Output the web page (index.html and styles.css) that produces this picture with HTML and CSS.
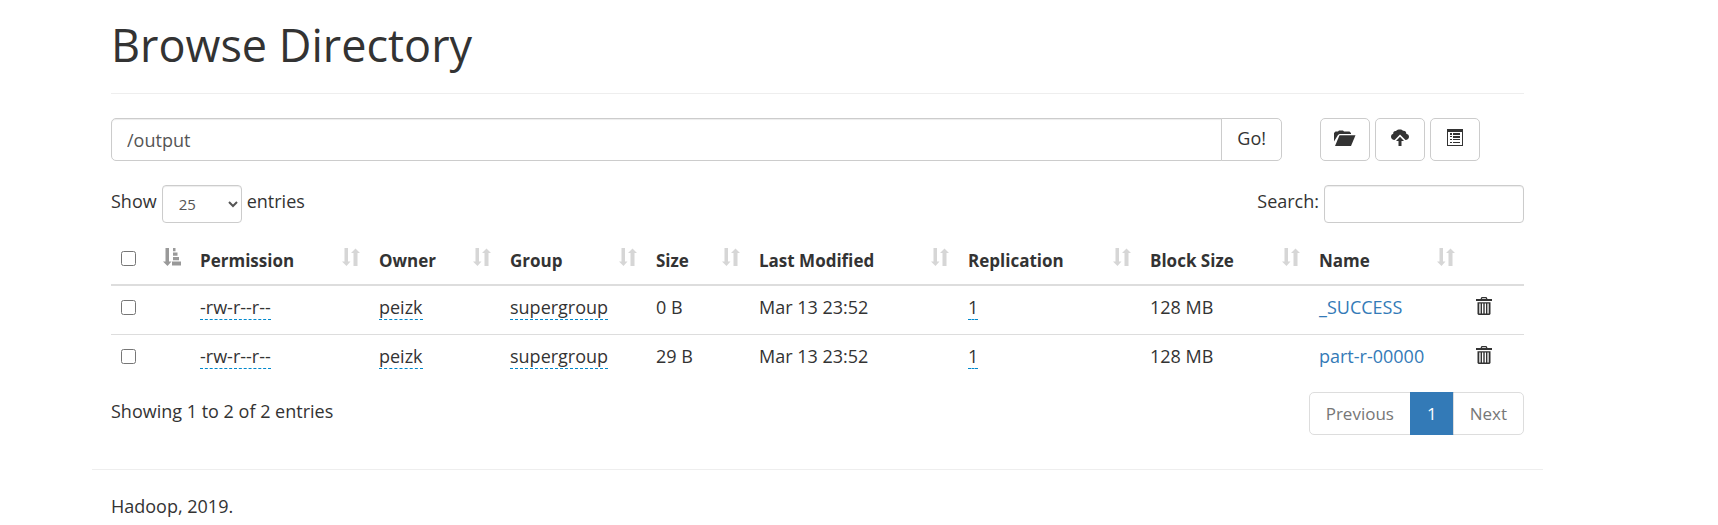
FILE: index.html
```html
<!DOCTYPE html>
<html lang="en">
<head>
    <meta charset="UTF-8">
    <meta name="viewport" content="width=device-width, initial-scale=1.0">
    <title>Browsing HDFS</title>
    <link rel="stylesheet" href="styles.css">
</head>
<body>
    <svg class="sprite" aria-hidden="true">
        <symbol id="folder-open" viewBox="0 0 22 16">
            <path d="M0 11.500V3L1.500 1.500H4L5 .5H9L10 1.500H15.500L17 3V4H5.500L4 5Z"/>
            <path d="M5.500 5.200H21.500L17 16H1Z"/>
        </symbol>
        <symbol id="cloud-upload" viewBox="0 0 18 17">
            <path d="M3.600 11C1.500 11 0 9.500 0 7.700C0 6.200 .9 5.100 2.200 4.700C2.100 2.900 3.300 1.800 5 2.100C6 .9 7.300 .5 9 .5C10.300 .5 11.300 1 12 1.800C14 1.500 15.300 2.800 15.300 4.700C17 5 18 6.200 18 7.800C18 9.700 16.500 11 14.500 11L9 5.500Z"/>
            <path d="M9 7.800L13 12H10.500V17H7.500V12H5Z"/>
        </symbol>
        <symbol id="list-alt" viewBox="0 0 16 17">
            <path fill-rule="evenodd" d="M0 0H16V17H0ZM1 3V16H15V3Z"/>
            <path d="M3 4H5V6H3ZM6 4H13V6H6ZM3 7H5V8H3ZM6 7H13V9H6ZM3 10H5V11H3ZM6 10H13V11H6ZM3 13H5V14H3ZM6 13H13V14H6Z"/>
        </symbol>
        <symbol id="trash" viewBox="0 0 16 18">
            <path fill-rule="evenodd" d="M0 2H4.500L5.500 0H10.500L11.500 2H16V4H0ZM6.300 1.200L5.900 2H10.100L9.700 1.200Z"/>
            <path fill-rule="evenodd" d="M1.500 5.200H14.500V17L13.500 18H2.500L1.500 17ZM3.300 6.500V16.500H4.600V6.500ZM6 6.500V16.500H7.300V6.500ZM8.700 6.500V16.500H10V6.500ZM11.400 6.500V16.500H12.700V6.500Z"/>
        </symbol>
        <symbol id="sort" viewBox="0 0 18 18">
            <path d="M2.500 0H6V13.500H8.500L4.500 18L0 13.500H2.500ZM13.500 .5L18 5H15.500V18H11.500V5H9Z"/>
        </symbol>
        <symbol id="sort-asc" viewBox="0 0 18 18">
            <path d="M2.500 0H6V13.500H8.500L4.500 18L0 13.500H2.500ZM10 0H12.500V3.300H10ZM10 4.500H14.500V7.800H10ZM10 9H16V12.300H10ZM9 13.500H18V17.500H9Z"/>
        </symbol>
    </svg>

    <div class="container">
        <div class="page-header">
            <h1>Browse Directory</h1>
        </div>

        <div class="row">
            <form class="col input-group">
                <input type="text" class="form-control" id="directory" value="/output" aria-label="Directory">
                <button type="button" class="btn btn-go">Go!</button>
            </form>
            <div class="col actions">
                <button type="button" class="btn" aria-label="Create Directory"><svg class="icon-folder"><use href="#folder-open"/></svg></button>
                <button type="button" class="btn" aria-label="Upload Files"><svg class="icon-cloud"><use href="#cloud-upload"/></svg></button>
                <button type="button" class="btn" aria-label="Cut &amp; Paste"><svg class="icon-list"><use href="#list-alt"/></svg></button>
            </div>
        </div>

        <div class="table-tools">
            <div class="tool">
                <label for="length">Show</label>
                <select class="input-sm" id="length">
                    <option>10</option>
                    <option selected>25</option>
                    <option>50</option>
                </select>
                <label for="length">entries</label>
            </div>
            <div class="tool">
                <label for="search">Search:</label>
                <input type="search" class="input-sm" id="search">
            </div>
        </div>

        <table class="table">
            <colgroup>
                <col class="w-check"><col class="w-permission"><col class="w-owner"><col class="w-group"><col class="w-size">
                <col class="w-modified"><col class="w-replication"><col class="w-block"><col class="w-name"><col class="w-trash">
            </colgroup>
            <thead>
                <tr>
                    <th><div class="head"><input type="checkbox" aria-label="Select all"><svg class="sort active"><use href="#sort-asc"/></svg></div></th>
                    <th><div class="head">Permission<svg class="sort"><use href="#sort"/></svg></div></th>
                    <th><div class="head">Owner<svg class="sort"><use href="#sort"/></svg></div></th>
                    <th><div class="head">Group<svg class="sort"><use href="#sort"/></svg></div></th>
                    <th><div class="head">Size<svg class="sort"><use href="#sort"/></svg></div></th>
                    <th><div class="head">Last Modified<svg class="sort"><use href="#sort"/></svg></div></th>
                    <th><div class="head">Replication<svg class="sort"><use href="#sort"/></svg></div></th>
                    <th><div class="head">Block Size<svg class="sort"><use href="#sort"/></svg></div></th>
                    <th><div class="head">Name<svg class="sort"><use href="#sort"/></svg></div></th>
                    <th></th>
                </tr>
            </thead>
            <tbody>
                <tr>
                    <td><input type="checkbox" aria-label="Select _SUCCESS"></td>
                    <td><span class="editable">-rw-r--r--</span></td>
                    <td><span class="editable">peizk</span></td>
                    <td><span class="editable">supergroup</span></td>
                    <td>0 B</td>
                    <td>Mar 13 23:52</td>
                    <td><span class="editable">1</span></td>
                    <td>128 MB</td>
                    <td><a href="#">_SUCCESS</a></td>
                    <td><button type="button" class="btn-trash" aria-label="Delete _SUCCESS"><svg><use href="#trash"/></svg></button></td>
                </tr>
                <tr>
                    <td><input type="checkbox" aria-label="Select part-r-00000"></td>
                    <td><span class="editable">-rw-r--r--</span></td>
                    <td><span class="editable">peizk</span></td>
                    <td><span class="editable">supergroup</span></td>
                    <td>29 B</td>
                    <td>Mar 13 23:52</td>
                    <td><span class="editable">1</span></td>
                    <td>128 MB</td>
                    <td><a href="#">part-r-00000</a></td>
                    <td><button type="button" class="btn-trash" aria-label="Delete part-r-00000"><svg><use href="#trash"/></svg></button></td>
                </tr>
            </tbody>
        </table>

        <div class="table-footer">
            <div class="info">Showing 1 to 2 of 2 entries</div>
            <nav class="pagination">
                <a href="#">Previous</a>
                <a href="#" class="active">1</a>
                <a href="#">Next</a>
            </nav>
        </div>

        <footer class="footer">Hadoop, 2019.</footer>
    </div>
</body>
</html>
```
FILE: styles.css
```css
* { box-sizing: border-box; }
body {
    margin: 0;
    padding: 0 175px 0 92px;
    background: #fff;
    color: #333;
    font-family: "Segoe UI", "Open Sans", "Noto Sans", sans-serif;
    font-size: 18px;
    line-height: 25px;
}
a { color: #337ab7; text-decoration: none; }
input, select, button { font: inherit; color: inherit; }
svg { fill: currentColor; }
.sprite { display: none; }
.container { padding: 0 19px; }

.page-header {
    margin-bottom: 24px;
    padding: 20px 0 23px;
    border-bottom: 1px solid #eee;
}
h1 { margin: 0; font-size: 45px; font-weight: 400; line-height: 50px; }

.row { display: grid; grid-template-columns: 5fr 1fr; margin: 0 -19px; }
.col { display: flex; min-width: 0; padding: 0 19px; }
.actions { gap: 5px; }
.form-control {
    flex: 1;
    min-width: 0;
    height: 43px;
    padding: 8px 15px;
    border: 1px solid #ccc;
    border-radius: 5px 0 0 5px;
    box-shadow: inset 0 1px 1px rgba(0, 0, 0, 0.075);
    color: #555;
}
.btn {
    display: flex;
    align-items: center;
    justify-content: center;
    width: 50px;
    height: 43px;
    padding: 0 0 4px;
    background: #fff;
    border: 1px solid #ccc;
    border-radius: 5px;
    cursor: pointer;
}
.btn-go { width: 61px; padding-bottom: 2px; margin-left: -1px; border-radius: 0 5px 5px 0; }
.icon-folder { width: 22px; height: 16px; }
.icon-cloud { width: 18px; height: 17px; }
.icon-list { width: 16px; height: 17px; }

.table-tools {
    display: flex;
    justify-content: space-between;
    margin-top: 24px;
}
.tool { display: flex; gap: 5px; }
.tool label { padding-top: 4px; }
.input-sm {
    height: 38px;
    padding: 4px 12px;
    background: #fff;
    border: 1px solid #ccc;
    border-radius: 4px;
    box-shadow: inset 0 1px 1px rgba(0, 0, 0, 0.075);
    color: #555;
    font-size: 15px;
}
select.input-sm { width: 80px; padding-right: 6px; }
input.input-sm { width: 200px; }

.table {
    width: 100%;
    margin-top: 7px;
    border-collapse: collapse;
    table-layout: fixed;
}
.table th {
    height: 55px;
    padding: 6px 9px 0 10px;
    border-bottom: 2px solid #ddd;
    font-size: 17px;
    text-align: left;
}
.table td { height: 49px; padding: 0 10px 4px; }
.table tbody tr + tr td { border-top: 1px solid #ddd; }
.w-check { width: 79px; }
.w-permission { width: 179px; }
.w-owner { width: 131px; }
.w-group { width: 146px; }
.w-size { width: 103px; }
.w-modified { width: 209px; }
.w-replication { width: 182px; }
.w-block { width: 169px; }
.w-name { width: 155px; }
.w-trash { width: 60px; }
.head { display: flex; justify-content: space-between; align-items: center; white-space: nowrap; }
.sort { width: 18px; height: 18px; margin-bottom: 7px; color: #d6d6d6; }
.sort.active { color: #999; }
input[type="checkbox"] { display: block; width: 15px; height: 15px; margin: 0; }
.head input[type="checkbox"] { margin-bottom: 4px; }
.editable { display: inline-block; line-height: 24px; border-bottom: 1px dashed #08c; }
.btn-trash { display: block; padding: 0; margin: 0 2px 4px; background: none; border: 0; cursor: pointer; }
.btn-trash svg { display: block; width: 16px; height: 18px; }

.table-footer {
    display: flex;
    justify-content: space-between;
    margin-top: 9px;
}
.info { padding-top: 7px; }
.pagination { display: flex; }
.pagination a {
    height: 43px;
    margin-left: -1px;
    padding: 8px 16px;
    border: 1px solid #ddd;
    color: #777;
    font-size: 17px;
}
.pagination a:first-child { border-radius: 5px 0 0 5px; }
.pagination a:last-child { border-radius: 0 5px 5px 0; }
.pagination a.active { background: #337ab7; border-color: #337ab7; color: #fff; }

.footer {
    margin: 34px -19px 0;
    padding: 24px 19px 18px;
    border-top: 1px solid #eee;
}
```
